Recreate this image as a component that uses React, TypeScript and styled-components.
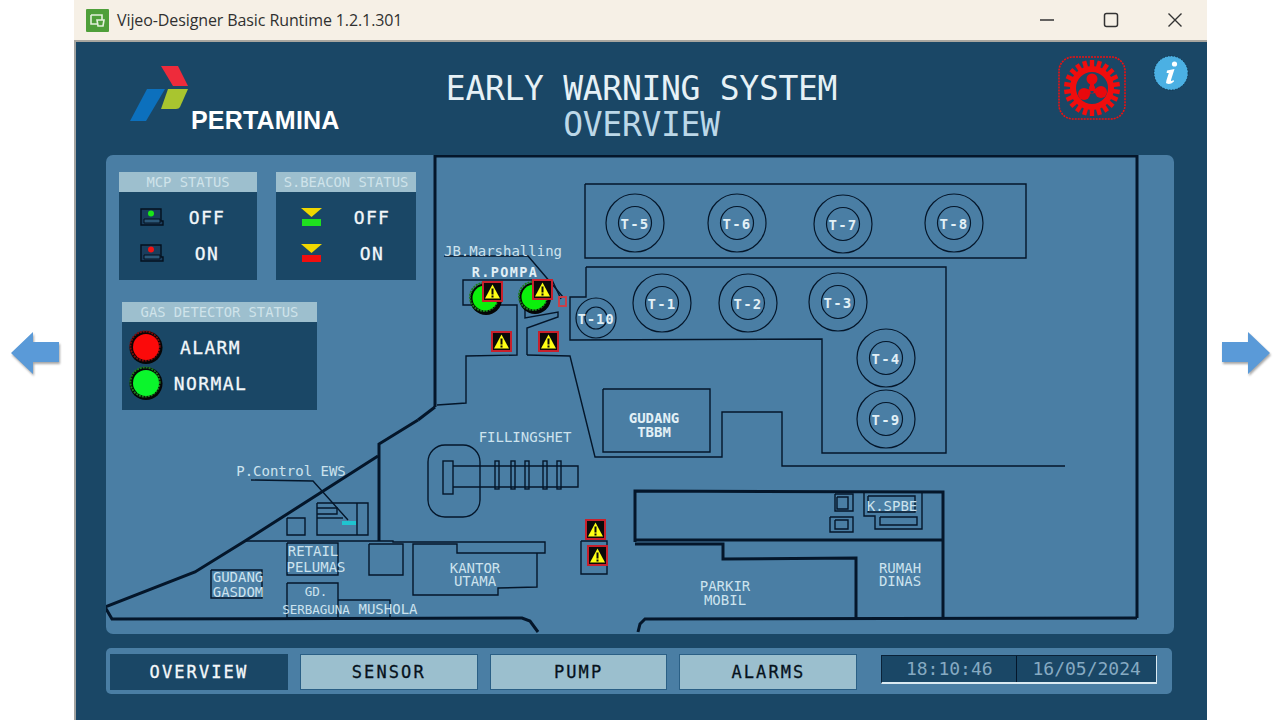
import { FC } from "react";
import styled, { createGlobalStyle } from "styled-components";

const MONO = `"DejaVu Sans Mono", "Liberation Mono", monospace`;
const LINE = "#04162a";

const GlobalStyle = createGlobalStyle`
  html, body { margin: 0; padding: 0; background: #fff; }
`;

const Page = styled.div`
  width: 1280px;
  height: 720px;
  display: flex;
  overflow: hidden;
  background: #fff;
`;

const Side = styled.div<{ $width: number; $pad: number }>`
  width: ${(p) => p.$width}px;
  padding-left: ${(p) => p.$pad}px;
  padding-bottom: 14px;
  box-sizing: border-box;
  display: flex;
  align-items: center;
`;

const Window = styled.div`
  width: 1133px;
  height: 720px;
  box-sizing: border-box;
  border-left: 2px solid #a3a3a0;
  background: #1a4766;
  display: flex;
  flex-direction: column;
`;

const TitleBar = styled.div`
  height: 42px;
  box-sizing: border-box;
  margin-left: -2px;
  padding-left: 12px;
  background: #f6f0e6;
  border-bottom: 2px solid #a8a69f;
  display: flex;
  align-items: center;
  font-family: "Open Sans", "Noto Sans", sans-serif;
  font-size: 16px;
  color: #303030;
`;

const AppName = styled.span`
  margin-left: 8px;
  flex: 1;
  letter-spacing: -0.1px;
`;

const WinButton = styled.div`
  width: 64px;
  height: 40px;
  display: flex;
  align-items: center;
  justify-content: center;
`;

const Header = styled.header`
  height: 113px;
  display: grid;
  grid-template-columns: 1fr auto 1fr;
  position: relative;
`;

const LogoBox = styled.div`
  display: flex;
  align-items: flex-start;
  padding: 24px 0 0 54px;
  position: relative;
`;

const LogoText = styled.span`
  font-family: "Liberation Sans", Arial, sans-serif;
  font-weight: 700;
  font-size: 25px;
  letter-spacing: 0.2px;
  color: #fff;
  margin: 44px 0 0 3px;
  line-height: 20px;
`;

const TitleBlock = styled.div`
  display: flex;
  flex-direction: column;
  align-items: center;
  padding-top: 29px;
  font-family: ${MONO};
  font-size: 33px;
  line-height: 36px;
  letter-spacing: -0.3px;
  color: #e6f1f6;
`;

const SubTitle = styled.div`
  color: #bcd8e8;
`;

const BadgeBox = styled.div`
  display: flex;
  justify-content: flex-end;
  align-items: flex-start;
  gap: 26px;
  padding: 13px 18px 0 0;
`;

const Panel = styled.main`
  margin: 0 33px 0 30px;
  height: 479px;
  box-sizing: border-box;
  padding: 17px 13px;
  background: #4a7ea4;
  border-radius: 7px;
  position: relative;
  display: flex;
  flex-direction: column;
  align-items: flex-start;
  gap: 22px;
`;

const MapCanvas = styled.svg`
  position: absolute;
  left: 0;
  top: 0;
`;

const CardRow = styled.div`
  display: flex;
  gap: 19px;
  position: relative;
`;

const Card = styled.section<{ $width: number; $inset?: number }>`
  width: ${(p) => p.$width}px;
  height: 108px;
  margin-left: ${(p) => p.$inset ?? 0}px;
  background: #1a4766;
  position: relative;
`;

const CardHeader = styled.h3`
  margin: 0;
  height: 20px;
  background: #9dbfce;
  color: #cfe3ea;
  font-family: ${MONO};
  font-weight: 400;
  font-size: 13.8px;
  line-height: 20px;
  text-align: center;
`;

const CardBody = styled.div<{ $cols: string }>`
  display: grid;
  grid-template-columns: ${(p) => p.$cols};
  grid-auto-rows: 36px;
  padding-top: 7px;
  align-items: center;
  justify-items: center;
`;

const StatusLabel = styled.span`
  font-family: ${MONO};
  font-size: 18px;
  letter-spacing: 1.4px;
  color: #f2f7fa;
  -webkit-text-stroke: 0.3px #f2f7fa;
  white-space: nowrap;
`;

const BottomBar = styled.nav`
  margin: 14px 35px 0 30px;
  height: 46px;
  box-sizing: border-box;
  padding: 6px 15px 4px 4px;
  background: #4a7ea4;
  border-radius: 5px;
  display: flex;
  align-items: flex-start;
  gap: 12px;
`;

const NavButton = styled.button<{ $active?: boolean }>`
  width: 178px;
  height: 36px;
  padding: 0;
  box-sizing: border-box;
  border: ${(p) => (p.$active ? "none" : "1px solid #2a5f85")};
  background: ${(p) => (p.$active ? "#1a4766" : "#9bbfce")};
  color: ${(p) => (p.$active ? "#f4f8fa" : "#06121c")};
  font-family: ${MONO};
  font-size: 17px;
  letter-spacing: 2.1px;
  -webkit-text-stroke: 0.3px currentColor;
`;

const Clock = styled.div`
  margin: 1px 0 0 12px;
  width: 276px;
  height: 29px;
  box-sizing: border-box;
  display: flex;
  background: #1a4766;
  border-top: 1px solid #0a2238;
  border-left: 1px solid #0a2238;
  border-right: 1px solid #dbeaf2;
  border-bottom: 2px solid #dbeaf2;
`;

const ClockCell = styled.div<{ $divided?: boolean }>`
  flex: ${(p) => (p.$divided ? "0 0 134px" : "1")};
  border-right: ${(p) => (p.$divided ? `1px solid ${LINE}` : "none")};
  text-align: center;
  font-family: ${MONO};
  font-size: 18px;
  line-height: 26px;
  color: #86aac2;
`;

const MapLine = styled.polyline<{ $w?: number }>`
  fill: none;
  stroke: ${LINE};
  stroke-width: ${(p) => p.$w ?? 1.4};
`;

const MapLabel = styled.text<{ $bold?: boolean; $size?: number; $space?: number }>`
  font-family: ${MONO};
  font-size: ${(p) => p.$size ?? 14}px;
  font-weight: ${(p) => (p.$bold ? 700 : 400)};
  letter-spacing: ${(p) => p.$space ?? 0}px;
  fill: ${(p) => (p.$bold ? "#e2f0f6" : "#cde3ee")};
  text-anchor: middle;
  dominant-baseline: central;
`;

const ArrowIcon: FC<{ flip?: boolean }> = ({ flip }) => (
  <svg
    width="50"
    height="44"
    viewBox="0 0 50 44"
    style={{ filter: "drop-shadow(1px 2px 1px rgba(60,60,60,.45))" }}
  >
    <path
      d={flip ? "M49 22 L27 1 L27 11 L1 11 L1 31 L27 31 L27 43 Z" : "M1 22 L23 1 L23 11 L49 11 L49 31 L23 31 L23 43 Z"}
      fill="#5a9ad8"
    />
  </svg>
);

const AppIcon = () => (
  <svg width="23" height="23" viewBox="0 0 23 23">
    <rect width="23" height="23" rx="1" fill="#4f9f3a" />
    <path d="M5 6h11v5M5 6v9h6" fill="none" stroke="#e4f1dc" strokeWidth="1.6" />
    <path d="M11 11h7l-1 6h-5z" fill="none" stroke="#e4f1dc" strokeWidth="1.6" />
  </svg>
);

const MinIcon = () => (
  <svg width="16" height="16" viewBox="0 0 16 16">
    <path d="M1 8h14" stroke="#333" strokeWidth="1.5" />
  </svg>
);

const MaxIcon = () => (
  <svg width="16" height="16" viewBox="0 0 16 16">
    <rect x="1.5" y="1.5" width="13" height="13" rx="2" fill="none" stroke="#333" strokeWidth="1.5" />
  </svg>
);

const CloseIcon = () => (
  <svg width="16" height="16" viewBox="0 0 16 16">
    <path d="M1.5 1.5l13 13M14.5 1.5l-13 13" stroke="#333" strokeWidth="1.4" />
  </svg>
);

const PertaminaMark = () => (
  <svg width="58" height="56" viewBox="0 0 58 56">
    <path d="M31 0 H48 L58 20 H43 Z" fill="#ee2b3b" />
    <path d="M17 23 H35 L16 55 H0 Z" fill="#0c70bd" />
    <path d="M38 23 H58 L50 41 Q49 43 46 43 H31 Z" fill="#a9c52f" />
  </svg>
);

const GearLogo = () => {
  const teeth = Array.from({ length: 22 }, (_, i) => (i * 360) / 22);
  return (
    <svg width="70" height="66" viewBox="-35 -33 70 66">
      <rect x="-33" y="-31" width="66" height="62" rx="14" fill="none" stroke="#ef1010" strokeWidth="1.6" strokeDasharray="2 1" />
      {teeth.map((a) => (
        <rect key={a} x="-2.2" y="-28" width="4.4" height="8" fill="#f00d0d" transform={`rotate(${a})`} />
      ))}
      <circle r="19" fill="none" stroke="#f00d0d" strokeWidth="6" />
      <g fill="#e8090d">
        <circle cx="0" cy="-9" r="5.5" />
        <circle cx="9" cy="4" r="6" />
        <circle cx="-8" cy="6" r="6" />
        <circle r="3" />
        <path d="M-2-5h4v8h-4zM-2 2l8-2 1 4-8 2zM2 2l-8-1-1 4 8 1z" />
      </g>
    </svg>
  );
};

const InfoIcon = () => (
  <svg width="36" height="36" viewBox="0 0 36 36">
    <circle cx="18" cy="18" r="17" fill="#4bb0e3" stroke="#0d2a3f" strokeWidth="0.8" strokeDasharray="1.5 1.5" />
    <circle cx="21.5" cy="9" r="2.6" fill="#fff" />
    <path d="M14 15.5 L21.5 14 L18 25 Q17.6 27 20.5 25 L21 26.5 Q17 30 13.8 28.6 Q12.6 28 13.4 25.5 L15.8 18 L13.6 18 Z" fill="#fff" />
  </svg>
);

const McpIcon: FC<{ lamp: string }> = ({ lamp }) => (
  <svg width="24" height="18" viewBox="0 0 24 18">
    <path d="M1 1 H21 V13 H23 V17 H1 Z" fill="#1a3d5c" stroke="#04101e" strokeWidth="1.4" />
    <path d="M4 11 H20 V15 H4 Z" fill="#2c5878" stroke="#04101e" strokeWidth="1" />
    <circle cx="11" cy="5.5" r="3" fill={lamp} />
  </svg>
);

const BeaconIcon: FC<{ base: string }> = ({ base }) => (
  <svg width="21" height="18" viewBox="0 0 21 18">
    <path d="M0 0 H21 L10.5 9 Z" fill="#f0d700" />
    <rect x="1" y="11" width="19" height="7" fill={base} />
  </svg>
);

const Lamp: FC<{ fill: string; edge: string }> = ({ fill, edge }) => (
  <svg width="36" height="36" viewBox="0 0 36 36">
    <circle cx="18" cy="18.5" r="16.5" fill="#050505" />
    <circle cx="17" cy="17" r="14.6" fill="none" stroke={edge} strokeWidth="2" strokeDasharray="2 1" />
    <circle cx="18" cy="18" r="13" fill={fill} />
  </svg>
);

const Tank: FC<{ x: number; y: number; label: string; small?: boolean }> = ({ x, y, label, small }) => (
  <g>
    <circle cx={x} cy={y} r={small ? 20 : 29} fill="none" stroke={LINE} strokeWidth="1.2" />
    <circle cx={x} cy={y} r={small ? 11 : 16.5} fill="none" stroke={LINE} strokeWidth="1.2" />
    <MapLabel x={x} y={y + 1} $bold $size={14} $space={small ? 0.8 : 1.2}>
      {label}
    </MapLabel>
  </g>
);

const Warning: FC<{ x: number; y: number }> = ({ x, y }) => (
  <g transform={`translate(${x} ${y})`}>
    <rect x="1" y="1" width="19" height="19" fill="#0a0a0a" stroke="#c8202c" strokeWidth="2" />
    <path d="M10.5 3.5 L18 17.5 H3 Z" fill="#ffff14" />
    <path d="M9.5 7.5h2v6h-2zM9.5 14.5h2v2h-2z" fill="#0a0a0a" />
  </g>
);

const PumpLamp: FC<{ x: number; y: number }> = ({ x, y }) => (
  <g>
    <circle cx={x + 1} cy={y + 1} r="16" fill="#050505" />
    <circle cx={x - 1} cy={y - 1} r="14" fill="none" stroke="#1d7a1d" strokeWidth="2" strokeDasharray="2 1" />
    <circle cx={x} cy={y} r="12.5" fill="#0bf00b" />
  </g>
);

const thick: string[] = [
  "435,407 435,156 1137,156 1137,618",
  "418,420 379,444 379,541",
  "378,456 245,541 195,572 105,607 112,619 522,618 530,621 538,632",
  "638,632 640,624 645,619 1137,618",
  "635,542 635,491 943,492 943,618",
  "635,540 943,540",
  "635,544 723,544 723,559 856,558 856,618",
  "435,407 418,420",
];

const thin: string[] = [
  "245,541 393,541 393,542 545,542 545,553 457,553 457,544 413,544 413,595 498,595 498,588 537,587 537,553",
  "369,544 403,544 403,575 369,575 369,544",
  "287,543 338,543 338,575 287,575 287,543",
  "287,583 338,583 338,618 287,618 287,583",
  "338,600 390,600 390,618",
  "211,570 262,570 262,598 211,598 211,570",
  "287,518 305,518 305,535 287,535 287,518",
  "317,503 368,503 368,535 317,535 317,503",
  "357,503 357,535",
  "317,508 337,508 337,514 317,514",
  "317,518 343,518",
  "251,480 313,481 348,520",
  "835,494 853,494 853,511 835,511 835,494",
  "837,497 848,497 848,509 837,509 837,497",
  "830,517 853,517 853,532 830,532 830,517",
  "835,520 848,520 848,529 835,529 835,520",
  "864,493 864,516 875,516 875,529 922,529 922,493",
  "868,496 915,496 915,512 868,512 868,496",
  "880,517 917,517 917,525 880,525 880,517",
  "581,541 607,541 607,574 581,574 581,541",
  "585,184 1026,184 1026,258 585,258 585,184",
  "586,267 946,267 946,453 822,453 822,339 570,340 570,297 586,297 586,267",
  "603,389 710,389 710,452 603,452 603,389",
  "527,355 570,356 595,457 722,457 722,412 782,412 782,466 1065,466",
  "437,405 466,403 466,356 517,355 517,305 463,305 463,280 552,280 561,299",
  "444,256 528,256 563,297",
  "527,355 527,328 558,317 558,312 525,318 525,305",
  "453,466 578,466 578,487 453,487",
];

const MAP_W = 1066;
const MAP_H = 479;

const PlantMap = () => (
  <MapCanvas width={MAP_W} height={MAP_H} viewBox={`106 155 ${MAP_W} ${MAP_H}`}>
    {thin.map((d) => (
      <MapLine key={d} points={d} />
    ))}
    {thick.map((d) => (
      <MapLine key={d} points={d} $w={3} />
    ))}
    <rect x="428" y="445" width="52" height="72" rx="17" fill="none" stroke={LINE} strokeWidth="1.4" />
    <rect x="443" y="461" width="10" height="33" fill="none" stroke={LINE} strokeWidth="1.4" />
    {[495, 511, 525, 543, 557].map((x) => (
      <rect key={x} x={x} y="461" width="4" height="28" fill="none" stroke={LINE} strokeWidth="1.4" />
    ))}
    <rect x="342" y="521" width="14" height="4" fill="#1fc4d0" />
    <rect x="559" y="297" width="7" height="9" fill="none" stroke="#c8404a" strokeWidth="2" />

    <Tank x={635} y={223} label="T-5" />
    <Tank x={737} y={223} label="T-6" />
    <Tank x={843} y={224} label="T-7" />
    <Tank x={954} y={223} label="T-8" />
    <Tank x={662} y={303} label="T-1" />
    <Tank x={748} y={303} label="T-2" />
    <Tank x={838} y={302} label="T-3" />
    <Tank x={886} y={358} label="T-4" />
    <Tank x={886} y={419} label="T-9" />
    <Tank x={596} y={318} label="T-10" small />

    <PumpLamp x={485} y={298} />
    <PumpLamp x={534} y={297} />
    <Warning x={482} y={281} />
    <Warning x={532} y={279} />
    <Warning x={491} y={331} />
    <Warning x={538} y={331} />
    <Warning x={585} y={519} />
    <Warning x={587} y={545} />

    <MapLabel x={503} y={251}>JB.Marshalling</MapLabel>
    <MapLabel x={505} y={272} $bold $size={13.5} $space={1.4}>R.POMPA</MapLabel>
    <MapLabel x={291} y={471}>P.Control EWS</MapLabel>
    <MapLabel x={525} y={437}>FILLINGSHET</MapLabel>
    <MapLabel x={654} y={418} $bold>GUDANG</MapLabel>
    <MapLabel x={654} y={432} $bold>TBBM</MapLabel>
    <MapLabel x={313} y={551}>RETAIL</MapLabel>
    <MapLabel x={316} y={567}>PELUMAS</MapLabel>
    <MapLabel x={238} y={577}>GUDANG</MapLabel>
    <MapLabel x={238} y={592}>GASDOM</MapLabel>
    <MapLabel x={316} y={591} $size={12.5}>GD.</MapLabel>
    <MapLabel x={316} y={609} $size={12.5}>SERBAGUNA</MapLabel>
    <MapLabel x={388} y={609}>MUSHOLA</MapLabel>
    <MapLabel x={475} y={568}>KANTOR</MapLabel>
    <MapLabel x={475} y={581}>UTAMA</MapLabel>
    <MapLabel x={725} y={586}>PARKIR</MapLabel>
    <MapLabel x={725} y={600}>MOBIL</MapLabel>
    <MapLabel x={900} y={568}>RUMAH</MapLabel>
    <MapLabel x={900} y={581}>DINAS</MapLabel>
    <MapLabel x={892} y={506}>K.SPBE</MapLabel>
  </MapCanvas>
);

export default function App() {
  return (
    <Page>
      <GlobalStyle />
      <Side $width={74} $pad={10}>
        <ArrowIcon />
      </Side>
      <Window>
        <TitleBar>
          <AppIcon />
          <AppName>Vijeo-Designer Basic Runtime 1.2.1.301</AppName>
          <WinButton><MinIcon /></WinButton>
          <WinButton><MaxIcon /></WinButton>
          <WinButton><CloseIcon /></WinButton>
        </TitleBar>
        <Header>
          <LogoBox>
            <PertaminaMark />
            <LogoText>PERTAMINA</LogoText>
          </LogoBox>
          <TitleBlock>
            <div>EARLY WARNING SYSTEM</div>
            <SubTitle>OVERVIEW</SubTitle>
          </TitleBlock>
          <BadgeBox>
            <GearLogo />
            <InfoIcon />
          </BadgeBox>
        </Header>
        <Panel>
          <PlantMap />
          <CardRow>
            <Card $width={138}>
              <CardHeader>MCP STATUS</CardHeader>
              <CardBody $cols="66px 44px">
                <McpIcon lamp="#19e619" />
                <StatusLabel>OFF</StatusLabel>
                <McpIcon lamp="#f01414" />
                <StatusLabel>ON</StatusLabel>
              </CardBody>
            </Card>
            <Card $width={140}>
              <CardHeader>S.BEACON STATUS</CardHeader>
              <CardBody $cols="70px 52px">
                <BeaconIcon base="#1fe01f" />
                <StatusLabel>OFF</StatusLabel>
                <BeaconIcon base="#f00f0f" />
                <StatusLabel>ON</StatusLabel>
              </CardBody>
            </Card>
          </CardRow>
          <Card $width={195} $inset={3}>
            <CardHeader>GAS DETECTOR STATUS</CardHeader>
            <CardBody $cols="48px 81px">
              <Lamp fill="#fb0a0a" edge="#7c0c0c" />
              <StatusLabel>ALARM</StatusLabel>
              <Lamp fill="#0bf52c" edge="#1d7a1d" />
              <StatusLabel>NORMAL</StatusLabel>
            </CardBody>
          </Card>
        </Panel>
        <BottomBar>
          <NavButton $active>OVERVIEW</NavButton>
          <NavButton>SENSOR</NavButton>
          <NavButton>PUMP</NavButton>
          <NavButton>ALARMS</NavButton>
          <Clock>
            <ClockCell $divided>18:10:46</ClockCell>
            <ClockCell>16/05/2024</ClockCell>
          </Clock>
        </BottomBar>
      </Window>
      <Side $width={73} $pad={14}>
        <ArrowIcon flip />
      </Side>
    </Page>
  );
}
